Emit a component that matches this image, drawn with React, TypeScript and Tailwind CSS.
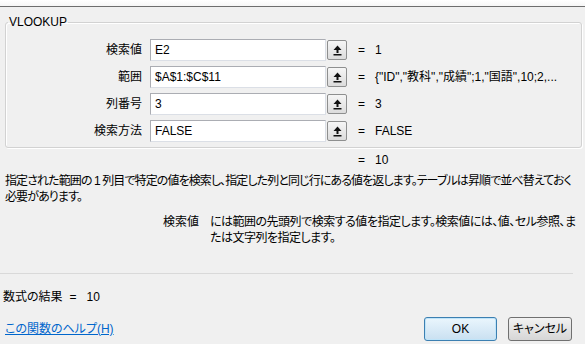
import React from 'react';

const args = [
  { label: '検索値', value: 'E2', result: '1' },
  { label: '範囲', value: '$A$1:$C$11', result: '{"ID","教科","成績";1,"国語",10;2,...' },
  { label: '列番号', value: '3', result: '3' },
  { label: '検索方法', value: 'FALSE', result: 'FALSE' },
];

function RefIcon() {
  return (
    <svg width="9" height="11" viewBox="0 0 9 11">
      <path d="M4.5 0.5 L8.5 5 H5.5 V8 H3.5 V5 H0.5 Z" fill="#111" />
      <rect x="0.5" y="9" width="8" height="1.5" fill="#111" />
    </svg>
  );
}

export default function App() {
  return (
    <div className="w-[585px] h-[344px] overflow-hidden bg-[#f0f0f0] text-[12px] leading-[16px] text-black font-['Liberation_Sans','Noto_Sans_CJK_JP',sans-serif] [font-feature-settings:'palt']">
      <div className="h-[7px] bg-gradient-to-b from-white to-[#f6f6f6] border-b border-[#6e6e6e]" />

      <fieldset className="ml-[5px] mr-[3px] mt-[8px] pt-[10px] pb-[5px] border border-[#d2d2d2] rounded-[3px] shadow-[inset_1px_1px_0_#fff,1px_1px_0_#fff]">
        <legend className="ml-[2px] px-[1px] leading-[14px]">VLOOKUP</legend>
        <div className="flex flex-col gap-[5px]">
          {args.map((a) => (
            <div key={a.label} className="flex items-center h-[22px]">
              <div className="w-[136px] text-right">{a.label}</div>
              <div className="ml-[8px] w-[176px] h-[22px] bg-white border border-[#abadb3] border-b-[#dbdfe6] border-r-[#dbdfe6] pl-[4px] flex items-center">
                {a.value}
              </div>
              <div className="ml-[1px] w-[20px] h-[20px] rounded-[2px] border border-[#8e8f8f] bg-gradient-to-b from-[#f6f6f6] to-[#dcdcdc] flex items-center justify-center">
                <RefIcon />
              </div>
              <span className="ml-[11px] w-[17px]">=</span>
              <span className="whitespace-nowrap">{a.result}</span>
            </div>
          ))}
        </div>
      </fieldset>

      <div className="mt-[4px] pl-[358px] flex">
        <span className="w-[17px]">=</span>
        <span>10</span>
      </div>

      <p className="mt-[5px] px-[5px] whitespace-nowrap tracking-[-0.9px]">
        指定された範囲の 1 列目で特定の値を検索し、指定した列と同じ行にある値を返します。テーブルは昇順で並べ替えておく
        <br />
        必要があります。
      </p>

      <div className="mt-[9px] flex">
        <div className="w-[199px] text-right">検索値</div>
        <p className="ml-[11px] whitespace-nowrap tracking-[-0.5px]">
          には範囲の先頭列で検索する値を指定します。検索値には、値、セル参照、ま
          <br />
          たは文字列を指定します。
        </p>
      </div>

      <div className="mt-[27px] mr-[12px] h-[1px] bg-[#d9d9d9]" />

      <div className="mt-[15px] px-[3px] flex">
        <span>数式の結果</span>
        <span className="ml-[7px]">=</span>
        <span className="ml-[10px]">10</span>
      </div>

      <div className="mt-[12px] pl-[5px] pr-[13px] flex items-center h-[24px]">
        <a className="text-[#0066cc] underline">この関数のヘルプ(H)</a>
        <button className="ml-auto w-[73px] h-[24px] rounded-[3px] border border-[#3c7fb1] bg-gradient-to-b from-[#eaf6fd] to-[#c9e0f1] shadow-[inset_0_0_0_1px_#bfe4f9]">
          OK
        </button>
        <button className="ml-[11px] w-[64px] h-[24px] rounded-[3px] border border-[#707070] bg-gradient-to-b from-[#f2f2f2] to-[#d6d6d6]">
          キャンセル
        </button>
      </div>
    </div>
  );
}
